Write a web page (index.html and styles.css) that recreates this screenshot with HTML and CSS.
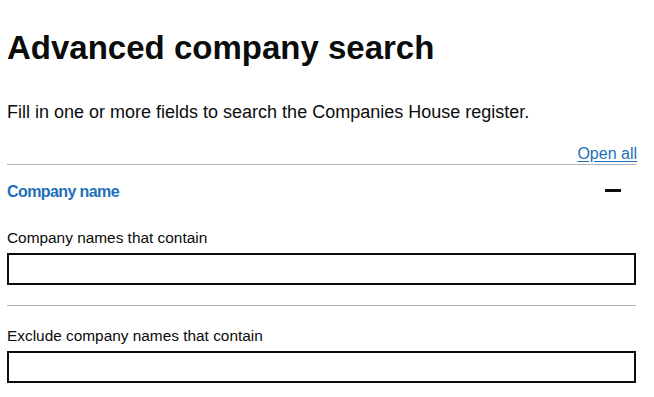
FILE: index.html
```html
<!DOCTYPE html>
<html lang="en">
<head>
<meta charset="utf-8">
<title>Advanced company search</title>
<link rel="stylesheet" href="styles.css">
</head>
<body>
<main class="page">
  <h1 class="title">Advanced company search</h1>
  <p class="lead">Fill in one or more fields to search the Companies House register.</p>
  <div class="accordion">
    <div class="accordion-controls">
      <a class="open-all" href="#">Open all</a>
    </div>
    <section class="accordion-section">
      <div class="section-header">
        <span class="section-title">Company name</span>
        <span class="minus" aria-hidden="true"></span>
      </div>
      <div class="section-body">
        <div class="field">
          <label class="field-label" for="contains">Company names that contain</label>
          <input class="text-input" id="contains" type="text">
        </div>
        <hr class="divider">
        <div class="field field-second">
          <label class="field-label" for="excludes">Exclude company names that contain</label>
          <input class="text-input" id="excludes" type="text">
        </div>
      </div>
    </section>
  </div>
</main>
</body>
</html>
```

FILE: styles.css
```css
html, body {
  margin: 0;
  padding: 0;
  background: #ffffff;
}

body {
  font-family: "Liberation Sans", Arial, sans-serif;
  color: #0b0c0c;
}

.page {
  width: 629px;
  padding: 30px 18px 0 7px;
}

.title {
  margin: 0;
  font-size: 33px;
  line-height: 35px;
  font-weight: 700;
  color: #0b0c0c;
}

.lead {
  margin: 35px 0 19px;
  font-size: 18px;
  line-height: 25px;
}

.accordion-controls {
  display: flex;
  justify-content: flex-end;
  height: 20px;
  border-bottom: 1px solid #b1b4b6;
}

.open-all {
  font-size: 16px;
  line-height: 20px;
  color: #1d70b8;
  text-decoration: underline;
  text-underline-offset: 2px;
  margin-right: -1px;
}

.section-header {
  display: flex;
  justify-content: space-between;
  align-items: center;
  padding-top: 17px;
}

.section-title {
  font-size: 16px;
  line-height: 20px;
  font-weight: 700;
  letter-spacing: -0.6px;
  color: #1d70b8;
}

.minus {
  display: block;
  width: 16px;
  height: 3px;
  background: #0b0c0c;
  margin-right: 15px;
  margin-bottom: 3px;
}

.section-body {
  display: flex;
  flex-direction: column;
}

.field {
  display: flex;
  flex-direction: column;
  gap: 5px;
  margin-top: 26px;
}

.field-second {
  margin-top: 20px;
}

.field-label {
  font-size: 15.4px;
  line-height: 20px;
}

.text-input {
  box-sizing: border-box;
  width: 100%;
  height: 32px;
  margin: 0;
  padding: 4px;
  border: 2px solid #0b0c0c;
  border-radius: 0;
  font: inherit;
  background: #ffffff;
}

.divider {
  margin: 20px 0 0;
  border: 0;
  border-top: 1px solid #b1b4b6;
  height: 0;
}
```
